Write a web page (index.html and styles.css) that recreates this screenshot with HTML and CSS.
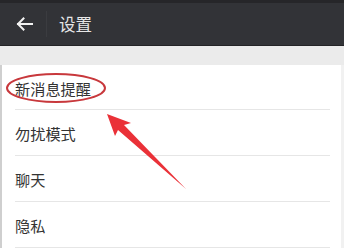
FILE: index.html
```html
<!DOCTYPE html>
<html lang="zh">
<head>
<meta charset="utf-8">
<link rel="stylesheet" href="styles.css">
</head>
<body>
<div class="screen">
  <header class="topbar">
    <div class="back">
      <svg width="17" height="14" viewBox="0 0 17 14"><path d="M16 7H2M7.5 1.5L2 7l5.5 5.5" fill="none" stroke="#f2f2f2" stroke-width="2" stroke-linecap="square"/></svg>
    </div>
    <div class="title">设置</div>
  </header>
  <div class="gap"></div>
  <ul class="list">
    <li class="item">新消息提醒</li>
    <li class="item">勿扰模式</li>
    <li class="item">聊天</li>
    <li class="item">隐私</li>
  </ul>
  <svg class="annot" width="344" height="249" viewBox="0 0 344 249">
    <ellipse cx="56" cy="88" rx="49" ry="14" fill="none" stroke="#c8383c" stroke-width="2"/>
    <path d="M107 114 L131 123 L124 125 L186 189 L118 130 L115 136 Z" fill="#ea3138"/>
  </svg>
</div>
</body>
</html>
```
FILE: styles.css
```css
* { box-sizing: border-box; }
html, body { margin: 0; padding: 0; background: #fff; }
body { font-family: "Noto Sans CJK SC", "Noto Sans", sans-serif; }
.screen { position: relative; width: 344px; height: 249px; overflow: hidden; }
.topbar {
  height: 46px;
  background: #323337;
  border-top: 3px solid #262629;
  border-bottom: 1px solid #232326;
  display: flex;
  align-items: center;
}
.back {
  width: 47px;
  height: 26px;
  display: flex;
  align-items: center;
  padding-left: 16px;
  border-right: 1px solid #3b3c40;
}
.title {
  margin-left: 12px;
  color: #e6e6e6;
  font-size: 16.5px;
  line-height: 1;
  margin-top: 1px;
}
.gap { height: 19px; background: #ebebeb; }
.list {
  list-style: none;
  margin: 0;
  padding: 0 0 0 13px;
  border-left: 2px solid #cfcfcf;
  border-right: 3px solid #f1f1f1;
}
.item {
  height: 46px;
  border-bottom: 1px solid #e6e6e6;
  margin-right: 11px;
  display: flex;
  align-items: center;
  font-size: 15.2px;
  color: #333;
  padding-top: 1px;
}
.item:first-child { height: 45px; }
.annot { position: absolute; left: 0; top: 0; pointer-events: none; }
```
